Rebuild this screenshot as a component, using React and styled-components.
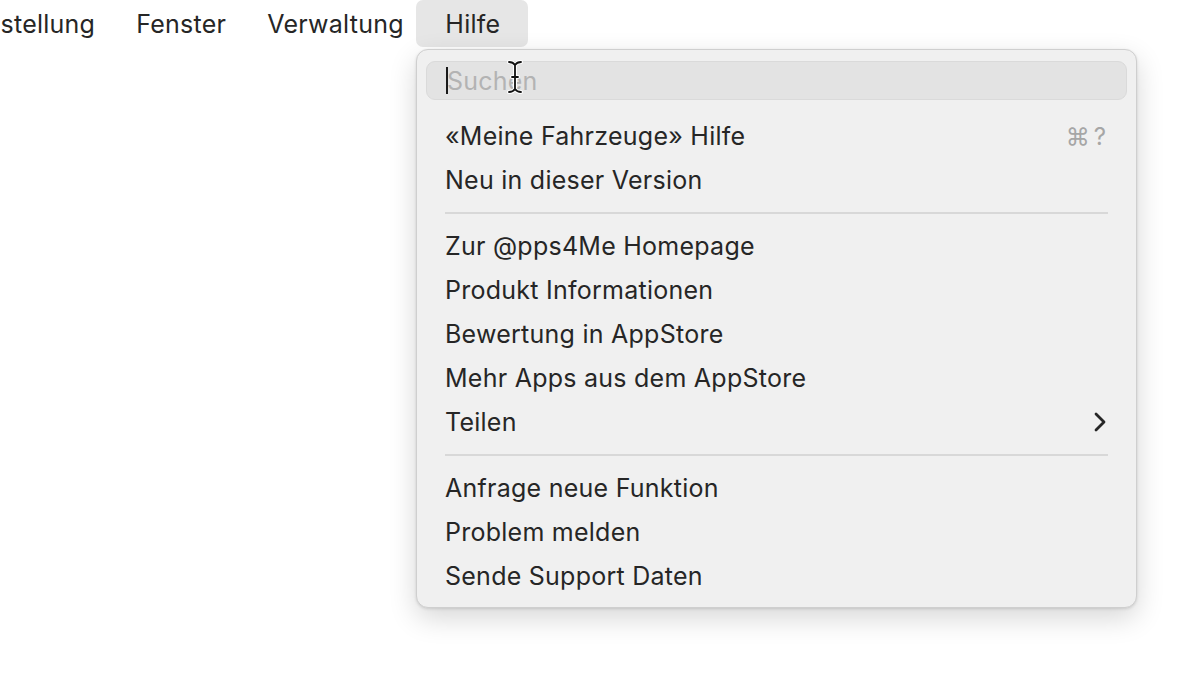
import React from "react";
import styled, { createGlobalStyle } from "styled-components";

const GlobalStyle = createGlobalStyle`
  html, body {
    margin: 0;
    padding: 0;
    background: #ffffff;
    font-family: "Inter", "Liberation Sans", sans-serif;
    color: #262626;
    -webkit-font-smoothing: antialiased;
  }
  #root {
    width: 1200px;
    height: 678px;
    overflow: hidden;
  }
`;

const Page = styled.div`
  width: 1200px;
  height: 678px;
  position: relative;
  overflow: hidden;
`;

const MenuBar = styled.nav`
  display: flex;
  align-items: stretch;
  height: 47px;
  margin-left: -20px;
`;

const BarItem = styled.div`
  display: flex;
  align-items: center;
  font-size: 25px;
  letter-spacing: 0.25px;
  padding: 0 20.5px;
  border-radius: 7px;
  background: ${(p) => (p.$active ? "#e6e6e6" : "transparent")};
  ${(p) => p.$active && "margin-left: -8px; padding: 0 28px 0 29px;"}
`;

const Dropdown = styled.div`
  position: absolute;
  top: 49px;
  left: 416px;
  width: 721px;
  padding: 11px 9px 9px;
  background: #f0f0f0;
  border: 1px solid #cfcfcf;
  border-radius: 12px;
  box-shadow: 0 10px 28px rgba(0, 0, 0, 0.16), 0 1px 3px rgba(0, 0, 0, 0.12);
  box-sizing: border-box;
`;

const SearchField = styled.div`
  display: flex;
  align-items: center;
  height: 39px;
  padding-left: 20px;
  background: #e3e3e3;
  border: 1px solid #dadada;
  border-radius: 9px;
  box-sizing: border-box;
  font-size: 25px;
  letter-spacing: 0.2px;
  color: #b3b3b3;
  margin-bottom: 14px;
`;

const Caret = styled.span`
  display: inline-block;
  width: 2px;
  height: 27px;
  background: #1a1a1a;
  margin-right: -1px;
  margin-left: -1px;
`;

const Row = styled.div`
  display: flex;
  align-items: center;
  justify-content: space-between;
  height: 44px;
  padding: 0 20px 0 19px;
  font-size: 25px;
  letter-spacing: 0.25px;
  color: #262626;
`;

const Shortcut = styled.span`
  color: #a6a6a6;
  font-size: 24px;
  letter-spacing: 4px;
  margin-right: -3px;
`;

const Separator = styled.div`
  height: 22px;
  display: flex;
  align-items: center;
  padding: 0 19px;
  &::after {
    content: "";
    flex: 1;
    height: 2px;
    background: #d8d8d8;
  }
`;

const Cursor = styled.svg`
  position: absolute;
  left: 507px;
  top: 60px;
`;

const groups = [
  [
    { label: "«Meine Fahrzeuge» Hilfe", shortcut: "⌘?" },
    { label: "Neu in dieser Version" },
  ],
  [
    { label: "Zur @pps4Me Homepage" },
    { label: "Produkt Informationen" },
    { label: "Bewertung in AppStore" },
    { label: "Mehr Apps aus dem AppStore" },
    { label: "Teilen", submenu: true },
  ],
  [
    { label: "Anfrage neue Funktion" },
    { label: "Problem melden" },
    { label: "Sende Support Daten" },
  ],
];

const Chevron = () => (
  <svg width="14" height="20" viewBox="0 0 14 20">
    <path
      d="M3 2 L11 10 L3 18"
      fill="none"
      stroke="#262626"
      strokeWidth="2.8"
      strokeLinecap="round"
      strokeLinejoin="round"
    />
  </svg>
);

export default function App() {
  return (
    <Page>
      <GlobalStyle />
      <MenuBar>
        <BarItem>stellung</BarItem>
        <BarItem>Fenster</BarItem>
        <BarItem>Verwaltung</BarItem>
        <BarItem $active>Hilfe</BarItem>
      </MenuBar>
      <Dropdown>
        <SearchField>
          <Caret />
          Suchen
        </SearchField>
        {groups.map((group, gi) => (
          <React.Fragment key={gi}>
            {gi > 0 && <Separator />}
            {group.map((item) => (
              <Row key={item.label}>
                <span>{item.label}</span>
                {item.shortcut && <Shortcut>{item.shortcut}</Shortcut>}
                {item.submenu && <Chevron />}
              </Row>
            ))}
          </React.Fragment>
        ))}
      </Dropdown>
      <Cursor width="16" height="34" viewBox="0 0 16 34">
        <path
          d="M2 2 Q6 2 8 5 Q10 2 14 2 M8 5 L8 29 M2 32 Q6 32 8 29 Q10 32 14 32 M5 17 L11 17"
          fill="none"
          stroke="#ffffff"
          strokeWidth="4"
          strokeLinecap="round"
        />
        <path
          d="M2 2 Q6 2 8 5 Q10 2 14 2 M8 5 L8 29 M2 32 Q6 32 8 29 Q10 32 14 32 M5 17 L11 17"
          fill="none"
          stroke="#111111"
          strokeWidth="1.8"
          strokeLinecap="round"
        />
      </Cursor>
    </Page>
  );
}
